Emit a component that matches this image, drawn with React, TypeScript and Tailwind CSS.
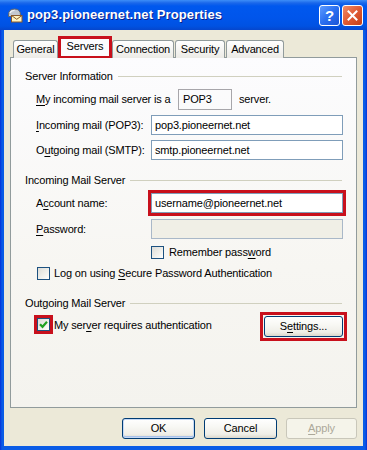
import React from "react";

const RED = "#c8101c";

function U({ children }: { children: React.ReactNode }) {
  return <span className="underline underline-offset-[2px] decoration-1">{children}</span>;
}

function CheckBox({ checked }: { checked?: boolean }) {
  return (
    <div className="w-[13px] h-[13px] shrink-0 border border-[#1c5180] bg-[linear-gradient(135deg,#dcdcd7_0%,#f4f4f0_70%,#ffffff_100%)] flex items-center justify-center">
      {checked && (
        <svg width="9" height="9" viewBox="0 0 9 9">
          <path d="M1 4.2 L3.5 6.8 L8 1.8" stroke="#21a121" strokeWidth="2.2" fill="none" />
        </svg>
      )}
    </div>
  );
}

function GroupHeader({ title }: { title: string }) {
  return (
    <div className="flex items-center h-[13px]">
      <span className="whitespace-nowrap">{title}</span>
      <div className="flex-1 h-px bg-[#d0d0bf] ml-[5px]" />
    </div>
  );
}

function Input({ value, disabled }: { value?: string; disabled?: boolean }) {
  return (
    <div
      className={
        "w-[192px] h-[20px] shrink-0 border flex items-center pl-[3px] " +
        (disabled ? "border-[#a9b8c8] bg-[#f0efe6]" : "border-[#7f9db9] bg-white")
      }
    >
      {value}
    </div>
  );
}

function TitleIcon() {
  return (
    <svg width="16" height="16" viewBox="0 0 16 16">
      <path d="M1.5 8 Q1.5 2 7.5 2 Q13.5 2 13.5 8 L13.5 9.5 L1.5 9.5 Z" fill="#c3c8cf" stroke="#5f6670" strokeWidth="1" />
      <path d="M3 6 Q4 3.5 7.5 3.5" stroke="#f4f6f8" strokeWidth="1.2" fill="none" />
      <rect x="4.5" y="8.5" width="10.5" height="6.5" fill="#fff4c0" stroke="#8a5a2b" strokeWidth="1" />
      <path d="M4.5 8.5 L9.75 12.3 L15 8.5" stroke="#8a5a2b" strokeWidth="1" fill="none" />
    </svg>
  );
}

function XPButton({
  children,
  w,
  disabled,
  isDefault,
}: {
  children: React.ReactNode;
  w: string;
  disabled?: boolean;
  isDefault?: boolean;
}) {
  const base = "h-[21px] rounded-[3px] border flex items-center justify-center leading-none ";
  if (disabled) {
    return (
      <div className={base + w + " border-[#c9c7ba] bg-[#f5f4ea] text-[#aca899]"}>{children}</div>
    );
  }
  return (
    <div
      className={
        base +
        w +
        " border-[#003c74] text-black bg-[linear-gradient(180deg,#ffffff_0%,#f8f8f4_40%,#efeee8_80%,#dcd8cc_100%)] " +
        (isDefault ? "shadow-[inset_0_0_0_1px_#c6d9f5,inset_0_-1px_0_1px_#a9c2ea]" : "")
      }
    >
      {children}
    </div>
  );
}

export default function App() {
  return (
    <div
      className="w-[367px] h-[450px] flex flex-col bg-[linear-gradient(90deg,#0831d9_0px,#0a5ce6_2px,#0a5ce6_365px,#0831d9_367px)] text-[11px] leading-[13px] tracking-[-0.15px] text-black overflow-hidden"
      style={{ fontFamily: '"Liberation Sans", Arial, sans-serif' }}
    >
      {/* Title bar */}
      <div className="h-[30px] shrink-0 flex items-center pl-[7px] pr-[4px] bg-[linear-gradient(180deg,#3d8ef8_0px,#1a67ea_3px,#0058ee_6px,#0055eb_18px,#0052e2_26px,#0646cc_30px)]">
        <TitleIcon />
        <span className="ml-[4px] flex-1 text-white font-bold text-[13px] leading-[16px] tracking-[0.1px] [text-shadow:1px_1px_0_#0a1f8a]">
          pop3.pioneernet.net Properties
        </span>
        <div className="w-[21px] h-[21px] rounded-[3px] border border-white bg-[linear-gradient(135deg,#5d9bff_0%,#2a6ff0_50%,#1b54d6_100%)] flex items-center justify-center text-white font-bold text-[15px] leading-none">
          ?
        </div>
        <div className="ml-[2px] w-[21px] h-[21px] rounded-[3px] border border-white bg-[linear-gradient(135deg,#f08c6a_0%,#e05a33_50%,#c43f18_100%)] flex items-center justify-center">
          <svg width="11" height="11" viewBox="0 0 11 11">
            <path d="M1.5 1.5 L9.5 9.5 M9.5 1.5 L1.5 9.5" stroke="white" strokeWidth="2" strokeLinecap="square" />
          </svg>
        </div>
      </div>

      {/* Body */}
      <div className="flex-1 mx-[4px] mb-[4px] bg-[#ece9d8] px-[6px] pt-[6px] flex flex-col">
        {/* Tabs */}
        <div className="h-[22px] -mb-px flex items-end ml-[3px] relative z-10">
          <div className="w-[45px] h-[18px] border border-b-0 border-[#919b9c] rounded-t-[3px] bg-[linear-gradient(180deg,#ffffff,#ecebe6)] flex items-center justify-center">
            General
          </div>
          <div
            className="w-[54px] h-[22px] border-[3px] border-b-[2px] bg-[#fcfcfe] flex items-start justify-center pt-[1px]"
            style={{ borderColor: RED }}
          >
            Servers
          </div>
          <div className="w-[62px] h-[18px] border border-b-0 border-[#919b9c] rounded-t-[3px] bg-[linear-gradient(180deg,#ffffff,#ecebe6)] flex items-center justify-center">
            Connection
          </div>
          <div className="ml-[1px] w-[50px] h-[18px] border border-b-0 border-[#919b9c] rounded-t-[3px] bg-[linear-gradient(180deg,#ffffff,#ecebe6)] flex items-center justify-center">
            Security
          </div>
          <div className="ml-[1px] w-[58px] h-[18px] border border-b-0 border-[#919b9c] rounded-t-[3px] bg-[linear-gradient(180deg,#ffffff,#ecebe6)] flex items-center justify-center">
            Advanced
          </div>
        </div>

        {/* Panel */}
        <div className="h-[351px] border border-[#919b9c] bg-[linear-gradient(180deg,#fcfcfe_0%,#f7f6f2_60%,#f4f3ee_100%)] pl-[14px] pr-[14px] pt-[12px] flex flex-col">
          <GroupHeader title="Server Information" />

          <div className="mt-[6px] pl-[11px] flex items-center h-[21px]">
            <span className="w-[142px] shrink-0 whitespace-nowrap">
              <U>M</U>y incoming mail server is a
            </span>
            <div className="w-[54px] h-[21px] shrink-0 border border-[#a7a6aa] flex items-center pl-[4px]">POP3</div>
            <span className="ml-[7px]">server.</span>
          </div>

          <div className="mt-[5px] pl-[11px] flex items-center">
            <span className="w-[115px] shrink-0 whitespace-nowrap">
              <U>I</U>ncoming mail (POP3):
            </span>
            <Input value="pop3.pioneernet.net" />
          </div>

          <div className="mt-[5px] pl-[11px] flex items-center">
            <span className="w-[115px] shrink-0 whitespace-nowrap">
              O<U>u</U>tgoing mail (SMTP):
            </span>
            <Input value="smtp.pioneernet.net" />
          </div>

          <div className="mt-[14px]">
            <GroupHeader title="Incoming Mail Server" />
          </div>

          <div className="mt-[6px] pl-[11px] flex items-center">
            <span className="w-[115px] shrink-0 whitespace-nowrap">
              A<U>c</U>count name:
            </span>
            <div className="outline-[3px] outline-solid" style={{ outlineColor: RED }}>
              <Input value="username@pioneernet.net" />
            </div>
          </div>

          <div className="mt-[6px] pl-[11px] flex items-center">
            <span className="w-[115px] shrink-0 whitespace-nowrap">
              <U>P</U>assword:
            </span>
            <Input disabled />
          </div>

          <div className="mt-[7px] pl-[126px] flex items-center gap-[5px]">
            <CheckBox />
            <span>
              Remember pass<U>w</U>ord
            </span>
          </div>

          <div className="mt-[8px] pl-[12px] flex items-center gap-[4px]">
            <CheckBox />
            <span>
              Log on using <U>S</U>ecure Password Authentication
            </span>
          </div>

          <div className="mt-[17px]">
            <GroupHeader title="Outgoing Mail Server" />
          </div>

          <div className="mt-[6px] pl-[12px] flex items-start">
            <div className="mt-[2px] outline-[3px] outline-solid" style={{ outlineColor: RED }}>
              <CheckBox checked />
            </div>
            <span className="ml-[4px] mt-[3px]">
              My ser<U>v</U>er requires authentication
            </span>
            <div className="ml-auto mr-[-1px] outline-[3px] outline-solid outline-offset-[1px]" style={{ outlineColor: RED }}>
              <XPButton w="w-[79px]">
                S<U>e</U>ttings...
              </XPButton>
            </div>
          </div>
        </div>

        {/* Bottom buttons */}
        <div className="mt-[10px] flex justify-end gap-[9px]">
          <XPButton w="w-[73px]" isDefault>
            OK
          </XPButton>
          <XPButton w="w-[73px]">Cancel</XPButton>
          <XPButton w="w-[71px]" disabled>
            <U>A</U>pply
          </XPButton>
        </div>
      </div>
    </div>
  );
}
